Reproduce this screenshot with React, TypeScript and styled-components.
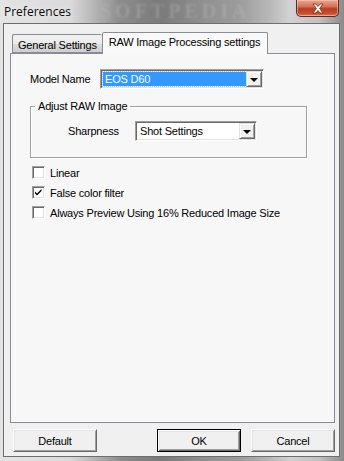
import React from "react";
import styled, { createGlobalStyle } from "styled-components";

const Global = createGlobalStyle`
  html, body { margin: 0; padding: 0; background: #6a6a6a; }
  #root { width: 344px; height: 461px; }
`;

const Window = styled.div`
  position: relative;
  width: 344px;
  height: 461px;
  overflow: hidden;
  display: flex;
  flex-direction: column;
  background:
    linear-gradient(90deg, #e4e4e4 0px, #dadada 70px, #b4b4b4 95px, #8c8c8c 120px, #7a7a7a 160px, #8e8e8e 200px, #9c9c9c 240px, #b8b8b8 270px, #d2d2d2 290px, #c0c0c0 320px, #8a8a8a 344px);
`;

const TitleBar = styled.div`
  height: 23px;
  display: flex;
  align-items: flex-start;
  flex-shrink: 0;
`;

const Title = styled.div`
  padding: 3px 0 0 4px;
  font-family: "Open Sans", "Noto Sans", sans-serif;
  font-size: 12px;
  color: #0c0c0c;
  text-shadow: 0 0 6px rgba(255,255,255,0.9);
  position: relative;
  z-index: 1;
`;

const Watermark = styled.div`
  position: absolute;
  left: 100px;
  top: 0px;
  font-family: "Liberation Serif", serif;
  font-weight: bold;
  font-size: 20px;
  line-height: 22px;
  letter-spacing: 4px;
  color: rgba(200, 200, 200, 0.3);
  filter: blur(1px);
  pointer-events: none;
`;

const CloseButton = styled.div`
  margin-left: auto;
  margin-right: 5px;
  width: 43px;
  height: 17px;
  box-sizing: border-box;
  border: 1px solid #5a2a24;
  border-top: none;
  border-radius: 0 0 5px 5px;
  background: linear-gradient(180deg, #e8a493 0%, #d4735a 40%, #b93c1f 55%, #c9502f 85%, #e0805a 100%);
  box-shadow: inset 0 0 0 1px rgba(255, 210, 190, 0.5);
  display: flex;
  align-items: center;
  justify-content: center;
  position: relative;
  z-index: 1;
`;

const Client = styled.div`
  flex: 1;
  margin: 0 4px 4px 3px;
  background: #f0f0f0;
  border: 1px solid #6d6d6d;
  display: flex;
  flex-direction: column;
  padding: 8px 4px 0 6px;
  font-family: "Liberation Sans", Arial, sans-serif;
  font-size: 11px;
  letter-spacing: -0.2px;
  color: #000;
`;

const TabStrip = styled.div`
  display: flex;
  align-items: flex-end;
  padding-left: 2px;
  height: 21px;
  position: relative;
  z-index: 2;
`;

const Tab = styled.div<{ $active?: boolean }>`
  box-sizing: border-box;
  height: ${(p) => (p.$active ? "22px" : "19px")};
  margin-bottom: ${(p) => (p.$active ? "-1px" : "0")};
  padding: ${(p) => (p.$active ? "3px 7px 0 6px" : "4px 5px 0 5px")};
  border: 1px solid #898c95;
  border-bottom: ${(p) => (p.$active ? "none" : "1px solid #898c95")};
  border-right: ${(p) => (p.$active ? "1px solid #898c95" : "none")};
  border-radius: 2px 2px 0 0;
  background: ${(p) =>
    p.$active ? "#f9f9f9" : "linear-gradient(180deg, #f2f2f2 0%, #ebebeb 50%, #dddddd 51%, #cfcfcf 100%)"};
  white-space: nowrap;
`;

const Panel = styled.div`
  height: 370px;
  box-sizing: border-box;
  border: 1px solid #898c95;
  background: #f7f7f7;
  display: flex;
  flex-direction: column;
  padding: 15px 0 0 19px;
`;

const Row = styled.div<{ $indent?: number }>`
  display: flex;
  align-items: center;
  padding-left: ${(p) => p.$indent ?? 0}px;
`;

const Label = styled.span<{ $width: number }>`
  width: ${(p) => p.$width}px;
  flex-shrink: 0;
`;

const Combo = styled.div<{ $width: number }>`
  box-sizing: border-box;
  width: ${(p) => p.$width}px;
  height: 20px;
  background: #fff;
  border: 1px solid;
  border-color: #a0a0a0 #fff #fff #a0a0a0;
  box-shadow: inset 1px 1px 0 #696969, inset -1px -1px 0 #e3e3e3;
  display: flex;
  padding: 2px;
`;

const ComboText = styled.div<{ $selected?: boolean }>`
  flex: 1;
  background: ${(p) => (p.$selected ? "#3399ff" : "transparent")};
  color: ${(p) => (p.$selected ? "#fff" : "#000")};
  padding-left: 2px;
  line-height: 14px;
  outline: ${(p) => (p.$selected ? "1px dotted #9cc9ff" : "none")};
`;

const ArrowButton = styled.div`
  box-sizing: border-box;
  width: 16px;
  height: 16px;
  margin: -1px -1px 0 0;
  background: #f0f0f0;
  border: 1px solid;
  border-color: #e3e3e3 #696969 #696969 #e3e3e3;
  box-shadow: inset 1px 1px 0 #fff, inset -1px -1px 0 #a0a0a0;
  display: flex;
  align-items: center;
  justify-content: center;
`;

const Arrow = styled.div`
  width: 0;
  height: 0;
  border-left: 4px solid transparent;
  border-right: 4px solid transparent;
  border-top: 4px solid #000;
  margin-top: 1px;
`;

const Group = styled.fieldset`
  margin: 11px 0 0 0;
  width: 277px;
  height: 58px;
  box-sizing: border-box;
  border: 1px solid #a0a0a0;
  box-shadow: 1px 1px 0 #fff, inset 1px 1px 0 #fff;
  padding: 9px 0 0 0;
`;

const Legend = styled.legend`
  padding: 0 3px;
  margin-left: 4px;
`;

const CheckList = styled.div`
  display: flex;
  flex-direction: column;
  gap: 7px;
  margin-top: 8px;
  margin-left: 2px;
`;

const CheckRow = styled.label`
  display: flex;
  align-items: center;
  gap: 5px;
  height: 13px;
`;

const Box = styled.span`
  box-sizing: border-box;
  width: 13px;
  height: 13px;
  background: #fff;
  border: 1px solid;
  border-color: #a0a0a0 #fff #fff #a0a0a0;
  box-shadow: inset 1px 1px 0 #696969, inset -1px -1px 0 #e3e3e3;
  display: flex;
  align-items: center;
  justify-content: center;
`;

const ButtonRow = styled.div`
  display: flex;
  margin-top: 6px;
  padding-left: 3px;
`;

const Button = styled.div<{ $default?: boolean; $gap?: number }>`
  box-sizing: border-box;
  width: 85px;
  height: 23px;
  margin-left: ${(p) => p.$gap ?? 0}px;
  background: #f0f0f0;
  border: 1px solid;
  border-color: ${(p) => (p.$default ? "#000" : "#fff #696969 #696969 #fff")};
  box-shadow: ${(p) =>
    p.$default
      ? "inset 1px 1px 0 #fff, inset -1px -1px 0 #696969, inset 2px 2px 0 #e3e3e3, inset -2px -2px 0 #a0a0a0"
      : "inset 1px 1px 0 #e3e3e3, inset -1px -1px 0 #a0a0a0"};
  display: flex;
  align-items: center;
  justify-content: center;
`;

const Checkmark = () => (
  <svg width="9" height="9" viewBox="0 0 9 9">
    <path d="M1 3.5 L3 5.5 L7.5 1 L7.5 3 L3 7.5 L1 5.5 Z" fill="#000" />
  </svg>
);

const CloseX = () => (
  <svg width="14" height="11" viewBox="0 0 14 11">
    <path
      d="M2 1 L5 1 L7 3.5 L9 1 L12 1 L8.6 5.5 L12 10 L9 10 L7 7.5 L5 10 L2 10 L5.4 5.5 Z"
      fill="#fff"
      stroke="#6a2a1a"
      strokeWidth="0.8"
    />
  </svg>
);

const Check = ({ checked, children }: { checked?: boolean; children: React.ReactNode }) => (
  <CheckRow>
    <Box>{checked && <Checkmark />}</Box>
    <span>{children}</span>
  </CheckRow>
);

export default function App() {
  return (
    <>
      <Global />
      <Window>
        <Watermark>SOFTPEDIA</Watermark>
        <TitleBar>
          <Title>Preferences</Title>
          <CloseButton>
            <CloseX />
          </CloseButton>
        </TitleBar>
        <Client>
          <TabStrip>
            <Tab>General Settings</Tab>
            <Tab $active>RAW Image Processing settings</Tab>
          </TabStrip>
          <Panel>
            <Row>
              <Label $width={70}>Model Name</Label>
              <Combo $width={164}>
                <ComboText $selected>EOS D60</ComboText>
                <ArrowButton>
                  <Arrow />
                </ArrowButton>
              </Combo>
            </Row>
            <Group>
              <Legend>Adjust RAW Image</Legend>
              <Row $indent={37}>
                <Label $width={67}>Sharpness</Label>
                <Combo $width={122}>
                  <ComboText>Shot Settings</ComboText>
                  <ArrowButton>
                    <Arrow />
                  </ArrowButton>
                </Combo>
              </Row>
            </Group>
            <CheckList>
              <Check>Linear</Check>
              <Check checked>False color filter</Check>
              <Check>Always Preview Using 16% Reduced Image Size</Check>
            </CheckList>
          </Panel>
          <ButtonRow>
            <Button>Default</Button>
            <Button $default $gap={60}>OK</Button>
            <Button $gap={10}>Cancel</Button>
          </ButtonRow>
        </Client>
      </Window>
    </>
  );
}
